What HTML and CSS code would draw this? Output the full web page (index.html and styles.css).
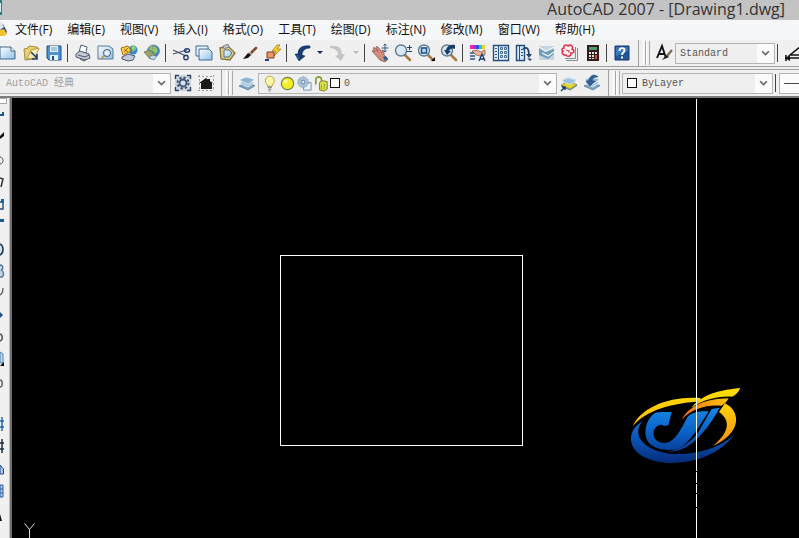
FILE: index.html
```html
<!DOCTYPE html>
<html lang="zh-CN">
<head>
<meta charset="utf-8">
<title>AutoCAD 2007 - [Drawing1.dwg]</title>
<link rel="stylesheet" href="styles.css">
</head>
<body>
<svg class="defs" aria-hidden="true">
  <defs>
    <linearGradient id="sheet" x1="0" y1="0" x2="1" y2="1"><stop offset="0" stop-color="#fff"/><stop offset="1" stop-color="#8fc0e8"/></linearGradient>
    <linearGradient id="blue" gradientUnits="userSpaceOnUse" x1="0" y1="80" x2="0" y2="250"><stop offset="0" stop-color="#1488ea"/><stop offset="0.5" stop-color="#0a5cc0"/><stop offset="1" stop-color="#062a78"/></linearGradient>
    <linearGradient id="gold" gradientUnits="userSpaceOnUse" x1="0" y1="20" x2="0" y2="200"><stop offset="0" stop-color="#ffe000"/><stop offset="0.4" stop-color="#ffc80a"/><stop offset="1" stop-color="#f58a10"/></linearGradient>
    <linearGradient id="amber" gradientUnits="userSpaceOnUse" x1="325" y1="50" x2="185" y2="119"><stop offset="0" stop-color="#ffc40a"/><stop offset="1" stop-color="#ee6a10"/></linearGradient>
    <symbol id="layers" viewBox="0 0 20 20"><path d="M2 13l7-3 9 2.500-7 4.500z" fill="#7fa5c6" stroke="#49708f" stroke-width=".7"/><path d="M2 10l7-3 9 2.500-7 4.500z" fill="#a9c8de" stroke="#fff" stroke-width=".6"/><path d="M2 7l7-3 9 2.500-7 4.500z" fill="#8db2d2" stroke="#fff" stroke-width=".6"/></symbol>
    <symbol id="lens" viewBox="0 0 20 20"><path d="M12 12l5 5" stroke="#a97843" stroke-width="2.600" stroke-linecap="round"/><circle cx="8" cy="7.500" r="5.500" fill="#d5e9f7" stroke="#617b91" stroke-width="1.400"/></symbol>
  </defs>
</svg>

<header class="title-bar">
  <svg class="app-mark" viewBox="0 0 2 15" aria-hidden="true"><path d="M0 0h2v15H0z" fill="#2b7d86"/><path d="M0 3h1v9H0z" fill="#d8f0f2"/></svg>
  <h1 class="title">AutoCAD 2007 - [Drawing1.dwg]</h1>
</header>

<nav class="menu-bar">
  <svg class="menu-mark" viewBox="0 0 7 18" aria-hidden="true"><path d="M0 2l3 1 4 8-2 3H0z" fill="#263e70"/><path d="M0 1l2 1 2 4-4 3z" fill="#dce7ee"/><path d="M0 9l4-1 3 5-3 2H0z" fill="#f2c32d"/></svg>
  <button class="menu">文件(F)</button><button class="menu">编辑(E)</button><button class="menu">视图(V)</button><button class="menu">插入(I)</button><button class="menu">格式(O)</button><button class="menu">工具(T)</button><button class="menu">绘图(D)</button><button class="menu">标注(N)</button><button class="menu">修改(M)</button><button class="menu">窗口(W)</button><button class="menu">帮助(H)</button>
</nav>

<div class="toolbars">
  <div class="toolbar-row">
    <div class="toolbar standard">
      <button class="tool" aria-label="新建"><svg viewBox="0 0 20 20"><path d="M2 4h11l4 4v8H2z" fill="url(#sheet)" stroke="#3f668b"/><path d="M13 4v4h4" fill="#fff" stroke="#3f668b"/></svg></button>
      <button class="tool" aria-label="打开"><svg viewBox="0 0 20 20"><path d="M3 6l4-1 1-2 8 1 1 2-4 10-9 1z" fill="#e8cf72" stroke="#a78d40"/><path d="M6 16l4-9 8-2-4 10z" fill="#f9edae" stroke="#a78d40" stroke-width=".8"/><path d="M10 9l6 6m0-4v5h-5" stroke="#203b68" stroke-width="1.600" fill="none"/></svg></button>
      <button class="tool" aria-label="保存"><svg viewBox="0 0 20 20"><path d="M3 3h14v14H5l-2-2z" fill="#4d93d1" stroke="#244d7c"/><path d="M6 3h8v6H6zM6 12h8v5H6z" fill="#eaf4fc"/><path d="M7 5h6M7 7h6" stroke="#6d94b3"/><path d="M8 13h2v4H8z" fill="#244d7c"/></svg></button>
      <span class="sep"></span>
      <button class="tool" aria-label="打印"><svg viewBox="0 0 20 20"><path d="M6 9l2-7 6 2-1 6z" fill="#fff" stroke="#536077"/><path d="M3 11l4-3 9 3 1 4-5 2-9-3z" fill="#c5cbd6" stroke="#4e566c"/><path d="M5 12l7 2 4-2M7 16l4 2 3-2" fill="none" stroke="#4e566c"/></svg></button>
      <button class="tool" aria-label="打印预览"><svg viewBox="0 0 20 20"><path d="M2 3h11l4 3v10H2z" fill="url(#sheet)" stroke="#54789a"/><path d="M9 12l-4 4" stroke="#c39a5d" stroke-width="2"/><circle cx="11" cy="10" r="3.500" fill="#e1f0fa" stroke="#3d5874"/></svg></button>
      <button class="tool" aria-label="发布"><svg viewBox="0 0 20 20"><circle cx="14" cy="7" r="4.500" fill="#3489c7"/><path d="M12 4l4-2 1 4-3 3z" fill="#8fcc75"/><path d="M2 5l7-2 3 5-8 4z" fill="#ffdc3d" stroke="#a46c10"/><path d="M5 6l4 3m0-4L5 9" stroke="#bd4d18"/><path d="M3 14l6-3 7 2-2 4-5 1-6-2z" fill="#c3cad5" stroke="#4e566c"/></svg></button>
      <button class="tool" aria-label="三维 DWF"><svg viewBox="0 0 20 20"><circle cx="11.500" cy="8" r="6" fill="#3b87c0" stroke="#64798d" stroke-width=".7"/><path d="M8 3l6 1 2 4-3 3-2-3-4-1z" fill="#8ccb63"/><path d="M9 4l3 1-1 2z" fill="#e37855"/><path d="M2 9l5-2 6 4-1 4-4 1z" fill="#9aa06a" stroke="#677148" stroke-width=".7"/><path d="M10 12l5 1-3 4-5-2z" fill="#c2d5e7" stroke="#536e88" stroke-width=".7"/></svg></button>
      <span class="sep"></span>
      <button class="tool" aria-label="剪切"><svg viewBox="0 0 20 20"><path d="M2 7l13 6M2 11l14-4" stroke="#47566c" stroke-width="1.300"/><circle cx="15" cy="14.500" r="2.200" fill="none" stroke="#273e74" stroke-width="1.400"/><ellipse cx="16" cy="7.500" rx="2.500" ry="1.800" fill="none" stroke="#273e74" stroke-width="1.400"/></svg></button>
      <button class="tool" aria-label="复制"><svg viewBox="0 0 20 20"><path d="M2 3h12v10H2z" fill="#e9f5fe" stroke="#3c6a99"/><path d="M5 6h10l3 3v8H5z" fill="url(#sheet)" stroke="#3c6a99"/></svg></button>
      <button class="tool" aria-label="粘贴"><svg viewBox="0 0 20 20"><path d="M3 5l8-2 7 7-5 7-9-1z" fill="#ddcd83" stroke="#827743" stroke-width="1.300"/><path d="M7 7h5l3 3-3 4H7z" fill="url(#sheet)" stroke="#56718b"/><path d="M6 3l5-2 1 3-5 2z" fill="#bcc2c7" stroke="#6b7177" stroke-width=".7"/></svg></button>
      <button class="tool" aria-label="特性匹配"><svg viewBox="0 0 20 20"><path d="M16 5l-6 6" stroke="#84452a" stroke-width="2.500" stroke-linecap="round"/><path d="M3 16l5-6 3 2-3 3z" fill="#151515"/><path d="M9 9l3 3" stroke="#b9b9b9" stroke-width="1.400"/></svg></button>
      <button class="tool" aria-label="块编辑器"><svg viewBox="0 0 20 20"><path d="M14 2L9 8h4l-3 6 8-8h-4l3-4z" fill="#ffd21f" stroke="#9a6d12" stroke-width=".7"/><path d="M4 9h7v6H4z" fill="#ef9560" stroke="#7d3c26"/><path d="M2 17h4" stroke="#1d3d78" stroke-width="2"/></svg></button>
      <span class="sep"></span>
      <button class="tool" aria-label="放弃"><svg viewBox="0 0 20 20"><path d="M18 3C10 2 6 5 6 11H3l4 7 6-5-3-1c0-4 3-7 8-7z" fill="#183d72" stroke="#102b50" stroke-width=".6"/><path d="M5 12l2 4" stroke="#4c7eb2" stroke-width=".7"/></svg></button>
      <button class="tool-arrow" aria-label="放弃列表"><svg viewBox="0 0 6 4"><path d="M0 0h6L3 3z" fill="#14284e"/></svg></button>
      <button class="tool" aria-label="重做"><svg viewBox="0 0 20 20"><path d="M2 3c8-1 12 2 12 8h3l-4 7-6-5 3-1c0-4-3-7-8-7z" fill="#c3c5c8"/></svg></button>
      <button class="tool-arrow" aria-label="重做列表"><svg viewBox="0 0 6 4"><path d="M0 0h6L3 3z" fill="#b9b9b9"/></svg></button>
      <span class="sep"></span>
      <button class="tool" aria-label="平移"><svg viewBox="0 0 20 20"><path d="M2 8c1-1 2 0 3 1L3 5c1-1 2 0 3 1l2 3-2-5c1-1 2 0 3 1l3 5 0-3c2 0 2 2 2 5l4 4-3 3-5-2z" fill="#d28d80" stroke="#8e5751" stroke-width=".8"/><path d="M13 14l3-1 2 3-3 2z" fill="#355c8e"/><path d="M15 1v8M11.500 5h7" stroke="#35577f"/><path d="M13.500 2.500L15 1l1.500 1.500M13.500 7.500L15 9l1.500-1.500" fill="none" stroke="#35577f"/></svg></button>
      <button class="tool" aria-label="实时缩放"><svg viewBox="0 0 20 20"><use href="#lens"/><path d="M14 4.500h5M16.500 2v5M14 8.500h5" stroke="#24466e"/></svg></button>
      <button class="tool" aria-label="窗口缩放"><svg viewBox="0 0 20 20"><use href="#lens"/><path d="M5.500 5h5v5h-5z" fill="#b9d9ef" stroke="#194b84" stroke-width="1.400"/><path d="M19 14v4h-4z" fill="#000"/></svg></button>
      <button class="tool" aria-label="缩放上一个"><svg viewBox="0 0 20 20"><use href="#lens"/><path d="M16 2c-5-1-8 1-9 5H5l3 5 4-4H10c1-2 3-3 6-2z" fill="#173d6b"/></svg></button>
      <span class="sep"></span>
      <button class="tool" aria-label="特性"><svg viewBox="0 0 20 20"><path d="M2 2h3v4H2z" fill="#f1299c"/><path d="M5 2h3v4H5z" fill="#9b32df"/><path d="M8 2h3v4H8z" fill="#334be5"/><path d="M11 2h3v4h-3z" fill="#24c7d8"/><path d="M14 2h3v4h-3z" fill="#f1d31d"/><path d="M4 8l5-1 4 2 4-2v5l-5 1-4-1z" fill="#e8b59c" stroke="#905b4b" stroke-width=".8"/><path d="M2 10h4M2 13h5M2 16h5" stroke="#2a5387" stroke-width="1.500"/><path d="M11 18l3-7 3 7m-5-2h4" fill="none" stroke="#173b6d" stroke-width="1.300"/></svg></button>
      <button class="tool" aria-label="设计中心"><svg viewBox="0 0 20 20"><path d="M2.500 2.500h15v15h-15z" fill="#e5f1fa" stroke="#244e7d" stroke-width="1.400"/><path d="M7.500 3v14" stroke="#244e7d"/><path d="M4 5.500h2M4 8.500h2M4 11.500h2M4 14.500h2" stroke="#2a5387"/><path d="M9.500 4.500h2v2h-2zM13.500 4.500h2v2h-2zM9.500 8.500h2v2h-2zM13.500 8.500h2v2h-2zM9.500 12.500h2v2h-2zM13.500 12.500h2v2h-2z" fill="#c2dbea" stroke="#244e7d" stroke-width=".8"/></svg></button>
      <button class="tool" aria-label="工具选项板"><svg viewBox="0 0 20 20"><path d="M2.500 2.500h8v15h-8z" fill="#d8eafa" stroke="#244e7d" stroke-width="1.400"/><path d="M5.500 3v14M7 6.500h2M7 9.500h2M7 12.500h2" stroke="#244e7d"/><path d="M9 6c4-3 6 0 6 6" fill="none" stroke="#24446b" stroke-width="1.600"/><path d="M12 11h6l-3 4zM13 15l5 1-2 2z" fill="#24446b"/></svg></button>
      <button class="tool" aria-label="图纸集管理器"><svg viewBox="0 0 20 20"><path d="M2 3h15v14H2z" fill="#c3d4de"/><path d="M2 5l6 4 9-3v5l-6 5-9-4z" fill="#6f9cb9"/><path d="M2 4l7 4 8-4M5 10l6 3 6-4" stroke="#eff6f9" stroke-width="1.300" fill="none"/></svg></button>
      <button class="tool" aria-label="标记集管理器"><svg viewBox="0 0 20 20"><path d="M17.500 5v12.500H6M15.500 4v11.500H5" fill="none" stroke="#828b96"/><path d="M4 5c-1-3 3-4 4-2 2-2 6 0 4 3 3 1 2 5-1 4 0 4-4 4-5 2-3 1-5-3-3-4-2-1-1-3 1-3z" fill="#fff4f4" stroke="#e2324a" stroke-width="1.500"/><path d="M6 7l3 1M9 7v3" stroke="#e2324a"/></svg></button>
      <button class="tool" aria-label="快速计算器"><svg viewBox="0 0 20 20"><path d="M4 2h12v16H4z" fill="#351b1c"/><path d="M6 4h8v3H6z" fill="#4e9c6c"/><path d="M6 9h2v2H6zM9 9h2v2H9zM12 9h2v2h-2zM6 12h2v2H6zM9 12h2v2H9zM6 15h2v1H6zM9 15h2v1H9z" fill="#e4dfdf"/><path d="M12 12h2v4h-2z" fill="#d34b42"/></svg></button>
      <span class="sep"></span>
      <button class="tool" aria-label="帮助"><svg viewBox="0 0 20 20"><path d="M3 3h14v14H3z" fill="#225594" stroke="#15396e"/><path d="M4 4h12v4L4 13z" fill="#3b78b9"/><path d="M7.500 8c0-4 5-3.500 5-.500 0 2-2.500 2-2.500 4.500" fill="none" stroke="#fff" stroke-width="1.900"/><path d="M9 13.500h2v2H9z" fill="#fff"/></svg></button>
    </div>
    <div class="toolbar styles">
      <span class="grip"></span>
      <button class="tool" aria-label="文字样式"><svg viewBox="0 0 20 20"><path d="M3 15l5-12 4 12M4 11h7" fill="none" stroke="#111" stroke-width="1.900"/><path d="M18 7l-5 6" stroke="#80674e" stroke-width="2.200"/><path d="M8 17l4-5 3 2z" fill="#17212b"/></svg></button>
      <label class="combo text-style"><select aria-label="文字样式控制"><option>Standard</option></select><svg class="chevron" viewBox="0 0 8 6"><path d="M1 1l3 3 3-3"/></svg></label>
      <span class="sep"></span>
      <button class="tool" aria-label="标注样式"><svg viewBox="0 0 20 20"><path d="M3 12v6M2 15h17M17 4L7 12h12" fill="none" stroke="#111" stroke-width="1.500"/><path d="M2 15l5-3v6z" fill="#111"/></svg></button>
    </div>
  </div>
  <div class="toolbar-row">
    <div class="toolbar workspaces">
      <label class="combo workspace off"><select aria-label="工作空间" disabled><option>AutoCAD 经典</option></select><svg class="chevron" viewBox="0 0 8 6"><path d="M1 1l3 3 3-3"/></svg></label>
      <button class="tool" aria-label="工作空间设置"><svg viewBox="0 0 20 20"><path d="M2 2h16v16H2z" fill="#cfd6db"/><path d="M2.500 6V2.500H6M14 2.500h3.500V6M17.500 14v3.500H14M6 17.500H2.500V14" fill="none" stroke="#2b4465" stroke-width="1.400"/><circle cx="10" cy="10" r="5.500" fill="none" stroke="#3b5370" stroke-width="2" stroke-dasharray="2.200 2.100"/><circle cx="10" cy="10" r="3.500" fill="#dce3e8" stroke="#3b5370" stroke-width="1.800"/></svg></button>
      <button class="tool" aria-label="我的工作空间"><svg viewBox="0 0 20 20"><path d="M2 3.500h16M2 17.500h16M3.500 2v16M17.500 2v16" stroke="#999" stroke-dasharray="2 2"/><path d="M3 10l7-5 2 1.500V6h2v2l3 2h-1v6H5v-6z" fill="#1a1a1a"/></svg></button>
    </div>
    <div class="toolbar layers">
      <span class="grip"></span>
      <button class="tool" aria-label="图层特性管理器"><svg viewBox="0 0 20 20"><use href="#layers"/></svg></button>
      <label class="combo layer"><select aria-label="图层控制"><option>0</option></select>
        <span class="layer-state">
          <svg viewBox="0 0 16 18"><path d="M5 12c0-2-2.500-3-2.500-6A4.500 4.500 0 0 1 12 6c0 3-2.500 4-2.500 6z" fill="#fff7a5" stroke="#b49e46"/><path d="M5 13h4.500M5.500 15h3.500M6 17h2" stroke="#66717d"/></svg>
          <svg viewBox="0 0 16 18"><circle cx="8" cy="9" r="6.500" fill="#f2ee24" stroke="#777e48" stroke-width="1.200"/><circle cx="6" cy="7" r="2" fill="#fdfb99"/></svg>
          <svg viewBox="0 0 16 18"><path d="M7 8h8v8H7z" fill="#e6f1f8" stroke="#6d90b0"/><circle cx="6.500" cy="7.500" r="5.500" fill="#a9c3d5" stroke="#708fa9" stroke-dasharray="2 1"/><circle cx="6.500" cy="7.500" r="2" fill="#d5e6f2" stroke="#5e84a5"/></svg>
          <svg viewBox="0 0 16 18"><path d="M2 10V5c0-4 6-4 6 0v3" fill="none" stroke="#8f972b" stroke-width="1.700"/><path d="M6 8l3-2 5 1v8l-3 2-5-1z" fill="#d9e34b" stroke="#747c20"/><path d="M8 10v5M11 9v6" stroke="#9ca72d"/></svg>
          <span class="swatch"></span>
        </span>
        <svg class="chevron" viewBox="0 0 8 6"><path d="M1 1l3 3 3-3"/></svg></label>
      <button class="tool" aria-label="将对象的图层置为当前"><svg viewBox="0 0 20 20"><use href="#layers"/><path d="M2 12l7-3 9 2.500-7 4.500z" fill="#e2d530" stroke="#8b832a" stroke-width=".6"/><path d="M2 8l7-3 9 2.500-7 4z" fill="#9dbfd9" stroke="#fff" stroke-width=".6"/><path d="M2 18l4-4M3 14h3v3" fill="none" stroke="#18376a" stroke-width="1.400"/></svg></button>
      <button class="tool" aria-label="上一个图层"><svg viewBox="0 0 20 20"><use href="#layers"/><path d="M16 4c-4-4-9-1-9 4H4l4 5 5-5h-3c0-3 2-4 6-4z" fill="#315f96" stroke="#183e6e" stroke-width=".6"/></svg></button>
    </div>
    <div class="toolbar properties">
      <span class="grip"></span>
      <label class="combo color"><select aria-label="颜色控制"><option>ByLayer</option></select><span class="layer-state"><span class="swatch"></span></span><svg class="chevron" viewBox="0 0 8 6"><path d="M1 1l3 3 3-3"/></svg></label>
      <span class="sep"></span>
      <label class="combo linetype"><select aria-label="线型控制"><option>————</option></select></label>
    </div>
  </div>
</div>

<main class="workspace-area">
  <aside class="palette" aria-label="绘图">
    <span class="palette-grip"></span>
    <button aria-label="直线"><svg viewBox="0 0 5 18"><path d="M0 8h3V5" fill="none" stroke="#1c5a94" stroke-width="2"/></svg></button>
    <button aria-label="构造线"><svg viewBox="0 0 5 18"><path d="M0 7l4-4v4l-4 3z" fill="#111"/></svg></button>
    <button aria-label="多段线"><svg viewBox="0 0 5 18"><path d="M0 6c4 0 4 7 0 7" fill="none" stroke="#555"/></svg></button>
    <button aria-label="正多边形"><svg viewBox="0 0 5 18"><path d="M0 5l3 1-2 8" fill="none" stroke="#333" stroke-width="1.500"/></svg></button>
    <button aria-label="矩形"><svg viewBox="0 0 5 18"><path d="M0 7h3v7H0" fill="none" stroke="#26496e" stroke-width="1.400"/><path d="M1 4h3v4H1z" fill="#1668ad"/></svg></button>
    <button aria-label="圆弧"><svg viewBox="0 0 5 18"><path d="M0 2h4v3H1L0 5z" fill="#1b5b92"/></svg></button>
    <button aria-label="圆"><svg viewBox="0 0 5 18"><path d="M0 5c4 2 4 9 0 11" fill="#cce2f2" stroke="#213748" stroke-width="1.500"/></svg></button>
    <button aria-label="修订云线"><svg viewBox="0 0 5 18"><path d="M0 4c4 0 3 5 1 5 4 2 3 8-1 7" fill="#bed6e8" stroke="#53718c" stroke-width="1.300"/></svg></button>
    <button aria-label="样条曲线"><svg viewBox="0 0 5 18"><path d="M3 5c0 4-1 6-3 7" fill="none" stroke="#555" stroke-width="1.200"/></svg></button>
    <button aria-label="椭圆"><svg viewBox="0 0 5 18"><path d="M0 7l3 3-3 3z" fill="#1c4d88"/></svg></button>
    <button aria-label="椭圆弧"><svg viewBox="0 0 5 18"><path d="M0 7c3 1 3 6 0 7" fill="none" stroke="#555" stroke-width="1.500"/></svg></button>
    <button aria-label="插入块"><svg viewBox="0 0 5 18"><path d="M0 3l3 2v9H0z" fill="#b5d9f3" stroke="#56819f"/><path d="M4 13v4H0z" fill="#000"/></svg></button>
    <button aria-label="创建块"><svg viewBox="0 0 5 18"><path d="M0 9c3 0 3 7 0 7" fill="none" stroke="#666" stroke-width="1.500"/></svg></button>
    <button class="spaced" aria-label="图案填充"><svg viewBox="0 0 5 18"><path d="M0 6h4M0 12h4M2 2v14" stroke="#2367a6" stroke-width="1.500"/></svg></button>
    <button aria-label="渐变色"><svg viewBox="0 0 5 18"><path d="M0 6h4M0 12h4M2 2v14" stroke="#1c2d43" stroke-width="1.500"/></svg></button>
    <button aria-label="面域"><svg viewBox="0 0 5 18"><path d="M0 6l3.500 4v5H0z" fill="#acc6ed" stroke="#234a87"/></svg></button>
    <button aria-label="表格"><svg viewBox="0 0 5 18"><path d="M0 4h3v12H0z" fill="#a8cdf0" stroke="#315d98"/><path d="M0 8h3M0 12h3" stroke="#315d98"/></svg></button>
    <button aria-label="多行文字"><svg viewBox="0 0 5 18"><path d="M0 7l2 7H0z" fill="#111"/></svg></button>
  </aside>
  <svg class="canvas" role="img" aria-label="绘图区">
    <rect x="268.500" y="157.500" width="242" height="190" fill="none" stroke="#fff"/>
    <g transform="translate(608 282) scale(.3333)">
      <path d="M38 139C62 84 145 48 240 54L246 64C154 69 77 92 38 139z" fill="url(#gold)"/>
      <path d="M214 84C240 50 280 32 361 24C355 38 346 46 336 50C290 48 246 60 214 84z" fill="url(#gold)"/>
      <path d="M185 119C207 80 250 56 326 55C320 66 312 74 304 77C261 73 216 85 185 119z" fill="url(#amber)"/>
      <path d="M315 70C364 94 365 160 279 198C330 156 332 120 297 96z" fill="url(#gold)"/>
      <path d="M70 121C36 155 57 207 147 221C230 229 302 201 342 166C291 230 213 253 134 248C27 238 12 166 56 132z" fill="url(#blue)"/>
      <path d="M104 99C118 95 136 96 155 96L145 136L131 138C123 128 106 139 101 153C96 178 117 194 146 187C174 173 185 141 204 109C216 96 242 92 266 94C237 142 205 196 172 207C126 216 85 202 78 171C72 142 83 116 104 99z" fill="url(#blue)"/>
      <path d="M275 87L299 83C278 123 244 171 207 196C187 211 162 216 139 216C185 209 215 184 235 156z" fill="url(#blue)"/>
    </g>
    <path d="M684.500 1v372M684.500 374v11M684.500 386v9M684.500 396v13M684.500 410V2000" stroke="#fff"/>
    <path d="M12.500 425.500l5 6 5-6M17.500 431v9" fill="none" stroke="#ddd"/>
  </svg>
</main>
</body>
</html>
```
FILE: styles.css
```css
* { box-sizing: border-box; }

body {
  margin: 0;
  height: 100vh;
  display: flex;
  flex-direction: column;
  overflow: hidden;
  background: #f0f0f0;
  color: #111;
  font-family: "Open Sans", "Noto Sans CJK SC", sans-serif;
  font-size: 12px;
}

button {
  flex: none;
  margin: 0;
  padding: 0;
  border: 0;
  background: none;
  color: inherit;
  font: inherit;
}

svg { display: block; }

.defs {
  position: absolute;
  width: 0;
  height: 0;
}

.title-bar {
  flex: none;
  display: flex;
  justify-content: space-between;
  height: 20px;
  padding-right: 14px;
  background: #c3c3c3;
}

.app-mark { width: 2px; height: 15px; }

.title {
  margin: 0;
  color: #333;
  font-size: 16px;
  font-weight: 400;
  line-height: 18px;
  white-space: nowrap;
}

.menu-bar {
  flex: none;
  display: flex;
  align-items: center;
  height: 20px;
  background: #f6f7f8;
}

.menu-mark {
  width: 7px;
  height: 18px;
  margin-right: 1px;
}

.menu {
  padding: 0 8px 0 7px;
  line-height: 20px;
  white-space: nowrap;
}

.toolbars {
  flex: none;
  border-bottom: 2px solid #7b7b7b;
}

.toolbar-row {
  display: flex;
  height: 27px;
  border-bottom: 1px solid #a0a0a0;
  overflow: hidden;
}

.toolbar-row + .toolbar-row {
  margin-top: 2px;
  border-top: 1px solid #a0a0a0;
  border-bottom: 0;
}

.toolbar {
  flex: none;
  display: flex;
  align-items: center;
  border-right: 1px solid #a0a0a0;
}

.toolbar:last-child { border-right: 0; }

.standard { margin-left: -4px; padding-right: 5px; }
.workspaces { padding-right: 4px; }
.layers { padding-right: 5px; }

.tool {
  width: 23px;
  height: 22px;
  display: grid;
  place-items: center;
}

.tool svg { width: 20px; height: 20px; }

.tool-arrow {
  width: 13px;
  height: 22px;
  display: grid;
  place-items: center;
}

.tool-arrow svg { width: 6px; height: 4px; }

.sep {
  flex: none;
  width: 2px;
  height: 18px;
  margin: 0 2px;
  border-left: 1px solid #444;
}

.grip {
  flex: none;
  width: 7px;
  height: 24px;
  margin: 0 2px 0 4px;
  background: linear-gradient(90deg, #fff 1px, #f0f0f0 1px, #f0f0f0 2px, #a8a8a8 2px, #a8a8a8 3px, #fff 3px, #fff 4px, #f0f0f0 4px, #f0f0f0 6px, #a8a8a8 6px);
}

.combo {
  flex: none;
  position: relative;
  display: block;
  height: 21px;
}

.combo select {
  appearance: none;
  display: block;
  width: 100%;
  height: 21px;
  margin: 0;
  padding: 0 20px 0 4px;
  border: 1px solid #b4b4b4;
  border-radius: 0;
  background: #efefef;
  color: #555;
  opacity: 1;
  font: 10px/19px "Liberation Mono", "Noto Sans CJK SC", monospace;
}

.combo.off select {
  padding-left: 6px;
  border-left: 0;
  color: #a0a0a0;
}

.chevron {
  position: absolute;
  top: 1px;
  right: 1px;
  width: 17px;
  height: 19px;
  padding: 0 4px;
  background: #fbfbfb;
  fill: none;
  stroke: #666;
  stroke-width: 1.5;
  pointer-events: none;
}

.text-style { width: 100px; }
.workspace { width: 171px; }
.layer { width: 299px; }
.color { width: 151px; }
.linetype { width: 60px; }

.combo.layer select { padding-left: 85px; }
.combo.color select { padding-left: 19px; }
.combo.linetype select { background: #fbfbfb; color: #111; }

.layer-state {
  position: absolute;
  top: 1px;
  left: 5px;
  height: 19px;
  display: flex;
  align-items: center;
  pointer-events: none;
}

.combo.layer .layer-state { left: 4px; }

.layer-state svg { width: 17px; height: 17px; }

.swatch {
  width: 10px;
  height: 10px;
  border: 1px solid #111;
  background: #fff;
}

.workspace-area {
  flex: 1;
  min-height: 0;
  display: flex;
}

.palette {
  flex: none;
  width: 12px;
  display: flex;
  flex-direction: column;
  overflow: hidden;
  border-right: 2px solid #6e6e6e;
  box-shadow: inset -1px 0 #bbb;
}

.palette-grip {
  flex: none;
  width: 7px;
  height: 6px;
  margin-bottom: 3px;
  border: solid #a8a8a8;
  border-width: 1px 1px 1px 0;
  background: #fff;
}

.palette button {
  height: 18px;
  margin-bottom: 4px;
}

.palette button:last-child { margin-top: 4px; }

.palette button svg { width: 5px; height: 18px; }

.palette .spaced { margin-top: 22px; }

.canvas {
  flex: 1;
  min-width: 0;
  width: 100%;
  height: 100%;
  background: #000;
}
```
